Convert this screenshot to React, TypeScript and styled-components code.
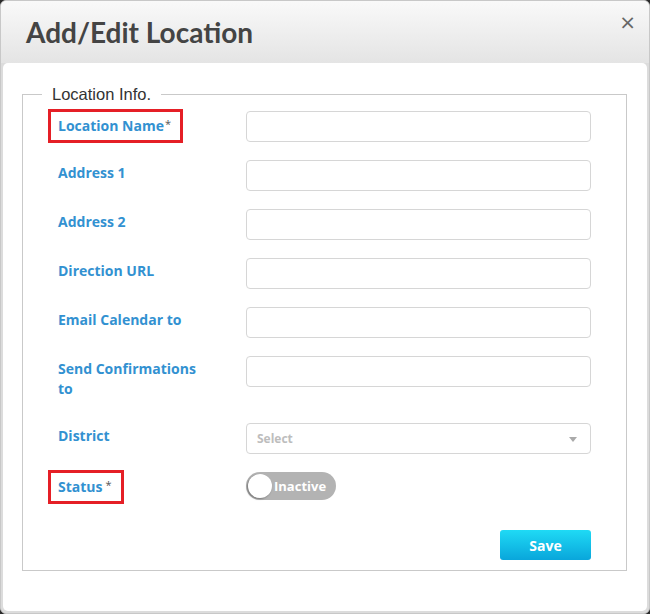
import React from 'react'
import styled, { createGlobalStyle } from 'styled-components'

const GlobalStyle = createGlobalStyle`
  html, body {
    margin: 0;
    padding: 0;
    background: #2b2b2b;
  }
  * {
    box-sizing: border-box;
  }
`

const fields = [
  { label: 'Location Name', required: true, tight: true, highlight: true },
  { label: 'Address 1' },
  { label: 'Address 2' },
  { label: 'Direction URL' },
  { label: 'Email Calendar to' },
  { label: 'Send Confirmations to' },
]

const App = () => (
  <>
    <GlobalStyle />
    <Modal>
      <Header>
        <Title>Add/Edit Location</Title>
        <Close aria-label="close">×</Close>
      </Header>
      <Body>
        <Fieldset>
          <Legend>Location Info.</Legend>
          {fields.map(f => (
            <Row key={f.label}>
              <Label>
                <LabelText highlight={f.highlight}>
                  {f.label}
                  {f.required && <Star tight={f.tight}>*</Star>}
                </LabelText>
              </Label>
              <Input type="text" />
            </Row>
          ))}
          <Row>
            <Label>
              <LabelText>District</LabelText>
            </Label>
            <Select>
              <span>Select</span>
              <Caret />
            </Select>
          </Row>
          <Row>
            <Label>
              <LabelText highlight>
                Status<Star>*</Star>
              </LabelText>
            </Label>
            <Toggle>
              <Knob />
              <ToggleText>Inactive</ToggleText>
            </Toggle>
          </Row>
          <Actions>
            <SaveButton>Save</SaveButton>
          </Actions>
        </Fieldset>
      </Body>
    </Modal>
  </>
)

const Modal = styled.div`
  width: 650px;
  height: 614px;
  border-radius: 6px;
  background: #dcdcdc;
  border: 1px solid #c8c8c8;
  padding: 0 2px 2px;
  display: flex;
  flex-direction: column;
  overflow: hidden;
`

const Header = styled.div`
  height: 62px;
  margin: 0 -2px;
  padding: 0 0 0 25px;
  display: flex;
  align-items: center;
  justify-content: space-between;
  background: linear-gradient(to bottom, #f9f9f9 0%, #e4e4e4 100%);
`

const Title = styled.h1`
  margin: 0 0 1px;
  font-family: Lato, 'Liberation Sans', sans-serif;
  font-weight: 700;
  font-size: 28px;
  color: #444;
`

const Close = styled.button`
  align-self: flex-start;
  margin: 9px 13px 0 0;
  padding: 0;
  border: 0;
  background: none;
  font-family: 'DejaVu Sans', sans-serif;
  font-size: 20px;
  line-height: 24px;
  color: #666;
  cursor: pointer;
`

const Body = styled.div`
  flex: 1;
  background: #fff;
  border-radius: 5px;
  padding: 22px 20px 0 19px;
`

const Fieldset = styled.fieldset`
  margin: 0;
  padding: 7px 35px 10px 35px;
  border: 1px solid #c9c9c9;
  height: 486px;
`

const Legend = styled.legend`
  margin-left: -16px;
  padding: 0 10px;
  font-family: 'Liberation Sans', Arial, sans-serif;
  font-size: 16.5px;
  color: #333;
`

const Row = styled.div`
  display: flex;
  align-items: flex-start;
  margin-bottom: 18px;
  min-height: 31px;
`

const Label = styled.div`
  width: 188px;
  flex-shrink: 0;
  padding: 3px 40px 6px 0;
  font-family: 'Open Sans', Lato, sans-serif;
  font-weight: 700;
  font-size: 14px;
  line-height: 20px;
  color: #3291d1;
`

const LabelText = styled.span<{ highlight?: boolean }>`
  position: relative;
  &::before {
    content: '';
    display: ${p => (p.highlight ? 'block' : 'none')};
    position: absolute;
    left: -10px;
    right: -12px;
    top: -7px;
    bottom: -8px;
    border: 3px solid #e51f26;
  }
`

const Star = styled.span<{ tight?: boolean }>`
  margin-left: ${p => (p.tight ? '1px' : '3px')};
  font-weight: 400;
  font-size: 11px;
  color: #555;
  vertical-align: 3px;
`

const Input = styled.input`
  flex: 1;
  height: 31px;
  border: 1px solid #d6d6d6;
  border-radius: 4px;
  padding: 0 10px;
  outline: none;
`

const Select = styled.div`
  flex: 1;
  height: 31px;
  border: 1px solid #d6d6d6;
  border-radius: 4px;
  padding: 0 13px 0 10px;
  display: flex;
  align-items: center;
  justify-content: space-between;
  font-family: 'Open Sans', Lato, sans-serif;
  font-weight: 700;
  font-size: 12px;
  color: #bdbdbd;
`

const Caret = styled.span`
  width: 0;
  height: 0;
  border-left: 4px solid transparent;
  border-right: 4px solid transparent;
  border-top: 5px solid #aaa;
  margin-top: 1px;
`

const Toggle = styled.div`
  width: 90px;
  height: 28px;
  border-radius: 14px;
  background: #b3b3b3;
  display: flex;
  align-items: center;
  padding: 0 2px;
`

const Knob = styled.span`
  width: 24px;
  height: 24px;
  border-radius: 50%;
  background: #fff;
  box-shadow: -1px 1px 2px rgba(0, 0, 0, 0.35);
`

const ToggleText = styled.span`
  margin-left: 2px;
  font-family: 'Open Sans', Lato, sans-serif;
  font-weight: 700;
  font-size: 13px;
  color: #fff;
`

const Actions = styled.div`
  display: flex;
  justify-content: flex-end;
  margin-top: 27px;
`

const SaveButton = styled.button`
  width: 91px;
  height: 30px;
  border: 0;
  border-radius: 3px;
  background: linear-gradient(to bottom, #1fdaf5 0%, #09a6db 100%);
  color: #fff;
  font-family: 'Open Sans', Lato, sans-serif;
  font-weight: 700;
  font-size: 14px;
  cursor: pointer;
`

export default App
